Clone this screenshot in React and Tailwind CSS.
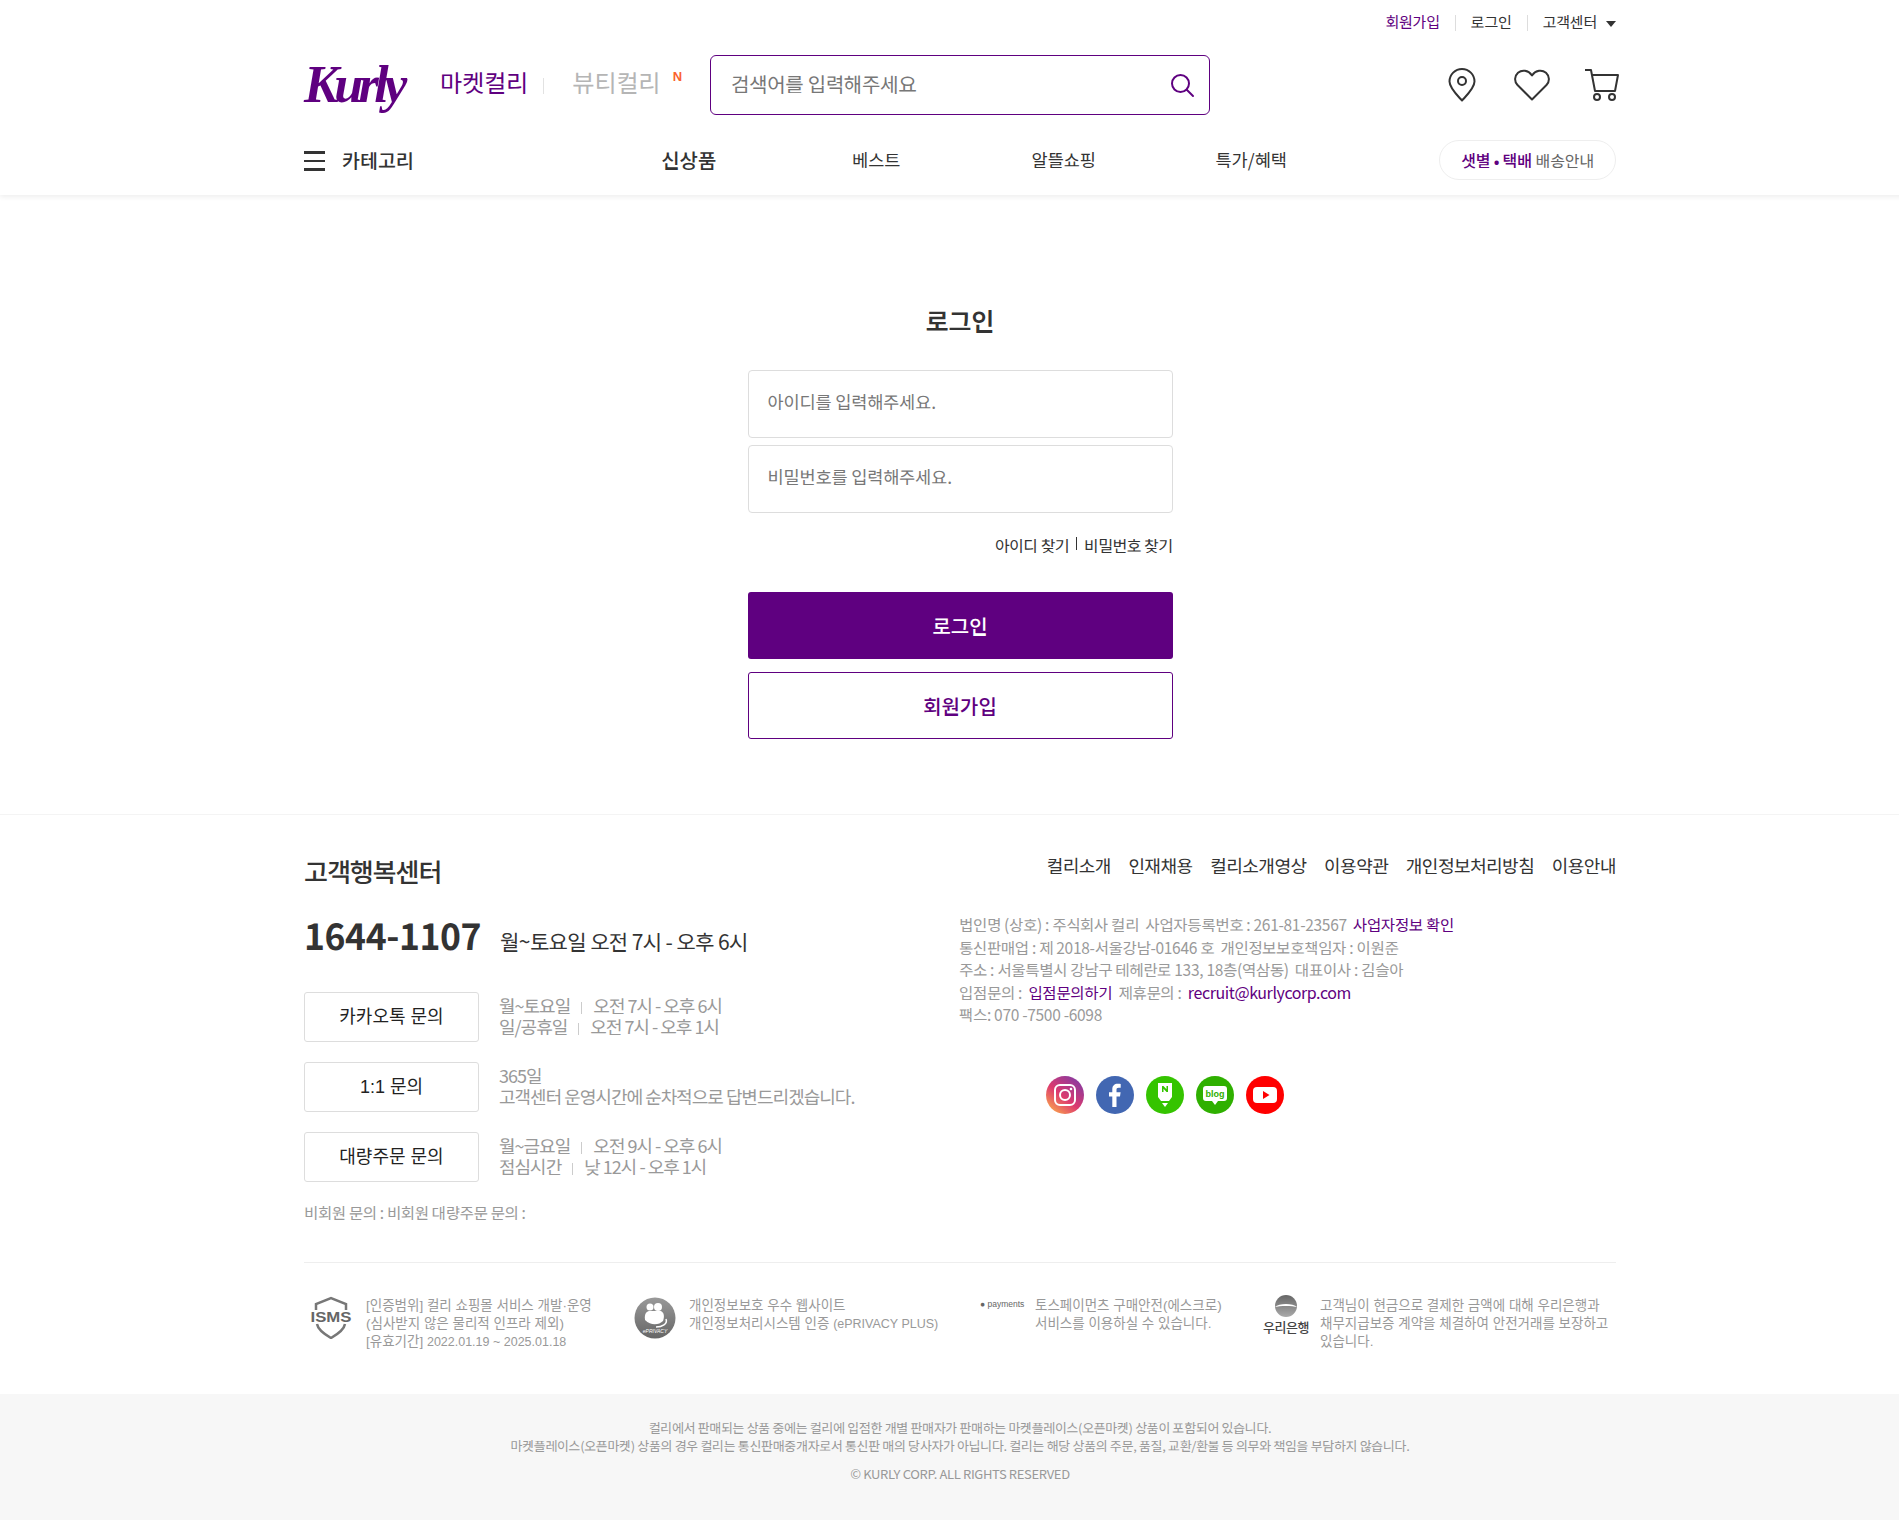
import React from "react";

const FONT = "font-['Noto_Sans_KR','Noto_Sans_CJK_KR',sans-serif]";

function Pin() {
  return (
    <svg width="28" height="34" viewBox="0 0 28 34" fill="none" stroke="#333" strokeWidth="2">
      <path d="M14 32.5C9 27 1.5 20 1.500 13.500A12.500 12.500 0 0 1 26.500 13.500C26.500 20 19 27 14 32.500Z" strokeLinejoin="round" />
      <circle cx="14" cy="13" r="4" />
    </svg>
  );
}
function Heart() {
  return (
    <svg width="36" height="32" viewBox="0 0 36 32" fill="none" stroke="#333" strokeWidth="2">
      <path d="M18 30.500L3.500 16C0 12.500 0.500 7 4 3.800C8 0.500 14 1 18 6.500C22 1 28 0.500 32 3.800C35.500 7 36 12.500 32.500 16Z" strokeLinejoin="round" />
    </svg>
  );
}
function Cart() {
  return (
    <svg width="36" height="32" viewBox="0 0 36 32" fill="none" stroke="#333" strokeWidth="2">
      <path d="M1 1H7L11 22H31L34 6H8" strokeLinejoin="round" />
      <circle cx="13" cy="28" r="3" />
      <circle cx="28" cy="28" r="3" />
    </svg>
  );
}
function SearchIcon() {
  return (
    <svg width="26" height="26" viewBox="0 0 26 26" fill="none" stroke="#5f0080" strokeWidth="2">
      <circle cx="11.500" cy="11.500" r="8.500" />
      <path d="M18 18L24 24" strokeLinecap="round" />
    </svg>
  );
}
function Social() {
  return (
    <div className="flex gap-[12px] mt-[50px] ml-[87px]">
      <svg width="38" height="38" viewBox="0 0 38 38">
        <defs>
          <linearGradient id="ig" x1="0.1" y1="1" x2="0.9" y2="0">
            <stop offset="0" stopColor="#fdb04a" />
            <stop offset="0.45" stopColor="#dd3a6e" />
            <stop offset="1" stopColor="#7b3aa8" />
          </linearGradient>
        </defs>
        <circle cx="19" cy="19" r="19" fill="url(#ig)" />
        <rect x="9" y="9" width="20" height="20" rx="5" fill="none" stroke="#fff" strokeWidth="2" />
        <circle cx="19" cy="19" r="5" fill="none" stroke="#fff" strokeWidth="2" />
        <circle cx="25" cy="13" r="1.300" fill="#fff" />
      </svg>
      <svg width="38" height="38" viewBox="0 0 38 38">
        <circle cx="19" cy="19" r="19" fill="#4267b2" />
        <path d="M20.500 31V20.500H24L24.600 16.300H20.500V13.800C20.500 12.500 21 11.700 22.600 11.700H24.700V8C24 7.900 23 7.800 21.700 7.800C18.500 7.800 16.300 9.700 16.300 13.300V16.300H13V20.500H16.300V31Z" fill="#fff" />
      </svg>
      <svg width="38" height="38" viewBox="0 0 38 38">
        <circle cx="19" cy="19" r="19" fill="#35c400" />
        <path d="M12 7H26V21L23 25H15L12 21Z" fill="#fff" />
        <path d="M16 27H22L19 31Z" fill="#fff" />
        <path d="M16 10V16H17.500V12.700L20.500 16H22V10H20.500V13.300L17.500 10Z" fill="#35c400" />
      </svg>
      <svg width="38" height="38" viewBox="0 0 38 38">
        <circle cx="19" cy="19" r="19" fill="#2fb000" />
        <path d="M10 10H28C30 10 31 11 31 13V22C31 24 30 25 28 25H22L19 29L16 25H10C8 25 7 24 7 22V13C7 11 8 10 10 10Z" fill="#fff" />
        <text x="19" y="21" textAnchor="middle" fontSize="9" fontWeight="700" fill="#2fb000" className="font-['Liberation_Sans',sans-serif]">blog</text>
      </svg>
      <svg width="38" height="38" viewBox="0 0 38 38">
        <circle cx="19" cy="19" r="19" fill="#ff0000" />
        <rect x="7" y="11" width="24" height="16" rx="4" fill="#fff" />
        <path d="M17 15L23.500 19L17 23Z" fill="#ff0000" />
      </svg>
    </div>
  );
}
function Isms() {
  return (
    <svg width="42" height="44" viewBox="0 0 42 44" className="shrink-0 mt-[-2px]">
      <path d="M6 15V9L21 3L36 9V15" fill="none" stroke="#777" strokeWidth="2.500" />
      <path d="M7 29C8 35 14 39 21 43C28 39 34 35 35 29" fill="none" stroke="#777" strokeWidth="2.500" />
      <text x="21" y="27" textAnchor="middle" fontSize="15" fontWeight="700" fill="#666" textLength="41" lengthAdjust="spacingAndGlyphs" className="font-['Liberation_Sans',sans-serif]">ISMS</text>
    </svg>
  );
}
function Eprivacy() {
  return (
    <svg width="42" height="42" viewBox="0 0 42 42" className="shrink-0">
      <defs>
        <linearGradient id="ep" x1="0" y1="0" x2="0" y2="1">
          <stop offset="0" stopColor="#999" />
          <stop offset="1" stopColor="#666" />
        </linearGradient>
      </defs>
      <circle cx="21" cy="21" r="20.500" fill="url(#ep)" />
      <circle cx="16" cy="10" r="3.500" fill="#fff" />
      <circle cx="24" cy="10" r="4" fill="#fff" />
      <path d="M11 23C10 16 13 14 16 14C20 14 23 14 27 14C31 16 30 21 29 24C25 28 17 29 11 23Z" fill="#fff" />
      <path d="M32 22C34 27 28 30 22 30" fill="none" stroke="#fff" strokeWidth="1.500" />
      <text x="21" y="36" textAnchor="middle" fontSize="5" fill="#fff" fontStyle="italic" className="font-['Liberation_Sans',sans-serif]">ePRIVACY</text>
    </svg>
  );
}
function Woori() {
  return (
    <div className="w-[48px] shrink-0 flex flex-col items-center">
      <svg width="24" height="24" viewBox="0 0 24 24" className="mt-[-3px]">
        <defs>
          <linearGradient id="wr" x1="0" y1="0" x2="0" y2="1">
            <stop offset="0" stopColor="#666" />
            <stop offset="1" stopColor="#aaa" />
          </linearGradient>
        </defs>
        <circle cx="12" cy="12" r="11" fill="url(#wr)" />
        <path d="M1 13C5 9 19 9 23 13C19 11.500 5 11.500 1 13Z" fill="#fff" />
      </svg>
      <span className="text-[13px] leading-[18px] font-medium text-[#444] tracking-[-0.5px] whitespace-nowrap mt-[1px]">우리은행</span>
    </div>
  );
}

function TimeRow({ label, children }) {
  return (
    <div className="whitespace-nowrap">
      {label}
      <span className="inline-block w-px h-[12px] bg-[#ccc] mx-[11px] align-[-1px]" />
      {children}
    </div>
  );
}

function Inquiry({ label, children }) {
  return (
    <div className="flex items-center">
      <div className="w-[175px] h-[50px] border border-[#ddd] rounded-[3px] flex items-center justify-center text-[18px] text-[#222] font-['Liberation_Sans','Noto_Sans_CJK_KR',sans-serif]">{label}</div>
      <div className="ml-[20px] pb-[2px] text-[18px] leading-[21px] tracking-[-1px] text-[#999]">{children}</div>
    </div>
  );
}

export default function App() {
  return (
    <div className={`w-full h-[1520px] overflow-hidden bg-white ${FONT}`}>
      <div className="w-[1920px]">
        <header className="h-[195px] bg-white shadow-[0_2px_5px_rgba(0,0,0,0.07)] relative">
          <div className="w-[1312px] mx-auto">
            <div className="h-[45px] flex items-center justify-end text-[15px] text-[#333] tracking-[-0.2px]">
              <span className="text-[#5f0080]">회원가입</span>
              <span className="w-px h-[16px] bg-[#ddd] mx-[15px]" />
              <span>로그인</span>
              <span className="w-px h-[16px] bg-[#ddd] mx-[15px]" />
              <span>고객센터</span>
              <span className="ml-[9px] mt-[2px] w-0 h-0 border-x-[5px] border-x-transparent border-t-[6px] border-t-[#333]" />
            </div>
            <div className="h-[60px] mt-[10px] flex items-center">
              <div className="w-[136px] shrink-0 text-[52px] leading-[60px] italic font-['Liberation_Serif',serif] text-[#5f0080] tracking-[-4.500px] font-bold">Kurly</div>
              <span className="shrink-0 whitespace-nowrap mb-[7px] text-[24px] text-[#5f0080]">마켓컬리</span>
              <span className="shrink-0 w-px h-[16px] bg-[#e2e2e2] mx-[15px] mt-[2px]" />
              <span className="shrink-0 whitespace-nowrap mb-[7px] ml-[13px] text-[24px] text-[#b5b5b5]">뷰티컬리</span>
              <span className="shrink-0 ml-[12px] mb-[16px] text-[13px] font-bold text-[#fa622f] font-['Liberation_Sans',sans-serif]">N</span>
              <div className="shrink-0 ml-[28px] w-[500px] h-[60px] border border-[#5f0080] rounded-[6px] flex items-center pl-[20px] pr-[14px]">
                <span className="mb-[2px] text-[20px] text-[#777] tracking-[-0.3px] flex-1">검색어를 입력해주세요</span>
                <SearchIcon />
              </div>
              <div className="flex items-center ml-[238px]">
                <Pin />
                <span className="ml-[38px]"><Heart /></span>
                <span className="ml-[34px]"><Cart /></span>
              </div>
            </div>
            <div className="h-[80px] flex items-center pt-[10px]">
              <div className="w-[291px] flex items-center">
                <div className="w-[21px] flex flex-col gap-[6px] mt-[2px]">
                  <span className="h-[2.500px] bg-[#333]" />
                  <span className="h-[2.500px] bg-[#333]" />
                  <span className="h-[2.500px] bg-[#333]" />
                </div>
                <span className="ml-[17px] text-[19.500px] font-medium text-[#333]">카테고리</span>
              </div>
              <div className="w-[187.500px] text-center text-[20px] font-medium text-[#333]">신상품</div>
              <div className="w-[187.500px] text-center text-[17.500px] text-[#333]">베스트</div>
              <div className="w-[187.500px] text-center text-[17.500px] text-[#333]">알뜰쇼핑</div>
              <div className="w-[187.500px] text-center text-[17.500px] text-[#333]">특가/혜택</div>
              <div className="ml-auto mt-[-1px] w-[177px] h-[40px] border border-[#eee] rounded-full flex items-center justify-center text-[16px] tracking-[-0.2px] whitespace-nowrap">
                <span className="font-medium text-[#5f0080]">샛별&nbsp;• 택배</span>
                <span className="ml-[4px] text-[#666]">배송안내</span>
              </div>
            </div>
          </div>
        </header>

        <main className="h-[620px] border-b border-[#f4f4f4]">
          <div className="w-[425px] mx-auto pt-[107px]">
            <h2 className="h-[36px] leading-[36px] text-center text-[25px] font-semibold text-[#333]">로그인</h2>
            <div className="mt-[32px] h-[68px] border border-[#ddd] rounded-[4px] flex items-center pl-[19px] pb-[3px] text-[17.500px] tracking-[-0.1px] text-[#777]">아이디를 입력해주세요.</div>
            <div className="mt-[7px] h-[68px] border border-[#ddd] rounded-[4px] flex items-center pl-[19px] pb-[3px] text-[17.500px] tracking-[-0.1px] text-[#777]">비밀번호를 입력해주세요.</div>
            <div className="mt-[21px] h-[22px] flex items-center justify-end text-[16px] text-[#333] tracking-[-0.5px]">
              <span>아이디 찾기</span>
              <span className="w-px h-[13px] bg-[#333] mx-[7px] mb-[4px]" />
              <span>비밀번호 찾기</span>
            </div>
            <button className="mt-[36px] w-full h-[67px] bg-[#5f0080] rounded-[3px] text-white text-[20px] font-medium block">로그인</button>
            <button className="mt-[13px] w-full h-[67px] border border-[#5f0080] rounded-[3px] text-[#5f0080] text-[20px] font-medium block">회원가입</button>
          </div>
        </main>

        <footer>
          <div className="w-[1312px] mx-auto">
            <div className="flex pt-[39px]">
              <div className="w-[655px]">
                <h2 className="h-[34px] leading-[34px] text-[26px] font-medium text-[#333] tracking-[-1px]">고객행복센터</h2>
                <div className="mt-[25px] h-[44px] flex items-center">
                  <strong className="text-[35.500px] font-bold text-[#333] tracking-[-0.4px] leading-[44px]">1644-1107</strong>
                  <span className="ml-[19px] mt-[14px] text-[21px] text-[#333] tracking-[-0.6px]">월~토요일 오전 7시 - 오후 6시</span>
                </div>
                <div className="mt-[35px] flex flex-col gap-[20px]">
                  <Inquiry label="카카오톡 문의">
                    <TimeRow label="월~토요일">오전 7시 - 오후 6시</TimeRow>
                    <TimeRow label="일/공휴일">오전 7시 - 오후 1시</TimeRow>
                  </Inquiry>
                  <Inquiry label="1:1 문의">
                    <div>365일</div>
                    <div className="whitespace-nowrap">고객센터 운영시간에 순차적으로 답변드리겠습니다.</div>
                  </Inquiry>
                  <Inquiry label="대량주문 문의">
                    <TimeRow label="월~금요일">오전 9시 - 오후 6시</TimeRow>
                    <TimeRow label="점심시간">낮 12시 - 오후 1시</TimeRow>
                  </Inquiry>
                </div>
                <p className="mt-[19px] text-[15.500px] leading-[22px] text-[#999] tracking-[-0.35px]">비회원 문의 : 비회원 대량주문 문의 :</p>
              </div>
              <div className="flex-1 min-w-0">
                <nav className="flex justify-end gap-[17.500px] h-[26px] leading-[22px] text-[18px] text-[#333] tracking-[-0.5px] whitespace-nowrap">
                  <span>컬리소개</span>
                  <span>인재채용</span>
                  <span>컬리소개영상</span>
                  <span>이용약관</span>
                  <span>개인정보처리방침</span>
                  <span>이용안내</span>
                </nav>
                <div className="mt-[33px] text-[15.500px] leading-[22.500px] text-[#999] tracking-[-0.3px] whitespace-nowrap">
                  <div>법인명 (상호) : 주식회사 컬리 &nbsp;사업자등록번호 : 261-81-23567 &nbsp;<span className="text-[#5f0080]">사업자정보 확인</span></div>
                  <div>통신판매업 : 제 2018-서울강남-01646 호 &nbsp;개인정보보호책임자 : 이원준</div>
                  <div>주소 : 서울특별시 강남구 테헤란로 133, 18층(역삼동) &nbsp;대표이사 : 김슬아</div>
                  <div>입점문의 : &nbsp;<span className="text-[#5f0080]">입점문의하기</span> &nbsp;제휴문의 : &nbsp;<span className="text-[#5f0080] text-[16px] tracking-[-0.4px]">recruit@kurlycorp.com</span></div>
                  <div>팩스: 070 -7500 -6098</div>
                </div>
                <Social />
              </div>
            </div>

            <div className="mt-[39px] border-t border-[#eee] pt-[34px] h-[132px] flex text-[13.500px] leading-[18px] text-[#999] font-['Liberation_Sans','Noto_Sans_CJK_KR',sans-serif]">
              <div className="w-[330px] pl-[6px] flex gap-[14px]">
                <Isms />
                <div className="whitespace-nowrap">
                  <div>[인증범위] 컬리 쇼핑몰 서비스 개발·운영</div>
                  <div>(심사받지 않은 물리적 인프라 제외)</div>
                  <div>[유효기간] <span className="text-[12.500px]">2022.01.19 ~ 2025.01.18</span></div>
                </div>
              </div>
              <div className="w-[346px] flex gap-[13px]">
                <Eprivacy />
                <div className="whitespace-nowrap">
                  <div>개인정보보호 우수 웹사이트</div>
                  <div>개인정보처리시스템 인증 <span className="text-[12.500px]">(ePRIVACY PLUS)</span></div>
                </div>
              </div>
              <div className="w-[282px] flex gap-[12px]">
                <span className="w-[43px] shrink-0 text-[8.500px] leading-[14px] text-[#666] whitespace-nowrap">● payments</span>
                <div className="whitespace-nowrap">
                  <div>토스페이먼츠 구매안전(에스크로)</div>
                  <div>서비스를 이용하실 수 있습니다.</div>
                </div>
              </div>
              <div className="flex-1 flex gap-[10px]">
                <Woori />
                <div className="whitespace-nowrap">
                  <div>고객님이 현금으로 결제한 금액에 대해 우리은행과</div>
                  <div>채무지급보증 계약을 체결하여 안전거래를 보장하고</div>
                  <div>있습니다.</div>
                </div>
              </div>
            </div>
          </div>

          <div className="h-[126px] bg-[#f7f7f7] pt-[25px] text-center text-[13px] leading-[18px] text-[#999] tracking-[-0.35px]">
            <p>컬리에서 판매되는 상품 중에는 컬리에 입점한 개별 판매자가 판매하는 마켓플레이스(오픈마켓) 상품이 포함되어 있습니다.</p>
            <p>마켓플레이스(오픈마켓) 상품의 경우 컬리는 통신판매중개자로서 통신판 매의 당사자가 아닙니다. 컬리는 해당 상품의 주문, 품질, 교환/환불 등 의무와 책임을 부담하지 않습니다.</p>
            <p className="mt-[10px]">© KURLY CORP. ALL RIGHTS RESERVED</p>
          </div>
        </footer>
      </div>
    </div>
  );
}
